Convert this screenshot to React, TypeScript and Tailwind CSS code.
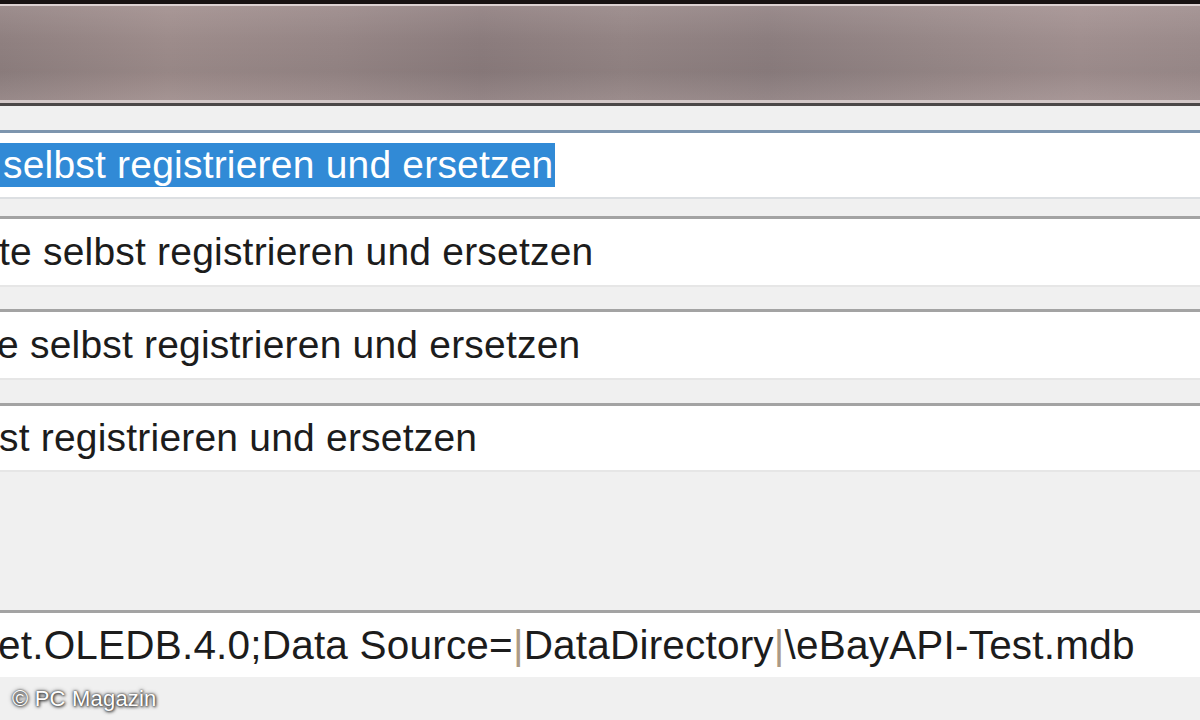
import React from "react";

const rowFont = "font-['Liberation_Sans',Arial,sans-serif]";

function Field({
  children,
  top = "border-[#a3a3a3]",
  height,
}: {
  children: React.ReactNode;
  top?: string;
  height: string;
}) {
  return (
    <div className={`border-t-[3px] ${top} bg-white ${height} flex items-center overflow-hidden whitespace-nowrap`}>
      {children}
    </div>
  );
}

export default function App() {
  return (
    <div className="w-[1200px] h-[720px] overflow-hidden bg-[#f0f0f0] flex flex-col">
      {/* title bar of the window behind, blurred */}
      <div className="h-[4px] bg-[#181212]" />
      <div className="h-[2px] bg-[#ddd2d2]" />
      <div className="h-[94px] bg-[linear-gradient(90deg,#8f8080_0%,#9d8c8b_14%,#968686_28%,#8b7c7d_40%,#938484_52%,#8c7e7f_64%,#978888_78%,#a08f8f_90%,#9b8b8b_100%)]">
        <div className="h-full bg-[linear-gradient(180deg,rgba(255,235,235,0.12)_0%,rgba(0,0,0,0)_35%,rgba(0,0,0,0.04)_70%,rgba(255,240,240,0.08)_100%)]" />
      </div>
      <div className="h-[3px] bg-[#d3c8c8]" />
      <div className="h-[3px] bg-[#4b4747]" />

      <div className={`flex flex-col pt-[24px] ${rowFont} text-[39px] text-[#1c1c1c] tracking-[0.2px]`}>
        <Field top="border-[#7d95ae]" height="h-[67px]">
          <span className="h-[44px] w-[555px] bg-[#318ad6] text-white flex items-center pl-[3px]">
            selbst registrieren und ersetzen
          </span>
        </Field>
        <div className="h-[2px] bg-[#dcdfe2]" />

        <div className="h-[17px]" />
        <Field height="h-[69px]">
          <span className="-ml-[1px]">te selbst registrieren und ersetzen</span>
        </Field>
        <div className="h-[2px] bg-[#e6e6e6]" />

        <div className="h-[22px]" />
        <Field height="h-[69px]">
          <span className="-ml-[3px]">e selbst registrieren und ersetzen</span>
        </Field>
        <div className="h-[2px] bg-[#e6e6e6]" />

        <div className="h-[23px]" />
        <Field height="h-[67px]">
          <span className="-ml-[1px]">st registrieren und ersetzen</span>
        </Field>
        <div className="h-[2px] bg-[#e6e6e6]" />

        <div className="h-[138px]" />
        <Field height="h-[67px]">
          <span className="-ml-[2px] text-[40.5px]">
            et.OLEDB.4.0;Data Source=<span className="text-[#ab9a86]">|</span>DataDirectory
            <span className="text-[#ab9a86]">|</span>\eBayAPI-Test.mdb
          </span>
        </Field>

        <div className="pl-[12px] pt-[6px] leading-[32px] text-[22px] text-white font-['Liberation_Sans',Arial,sans-serif] [text-shadow:0_0_2px_#333,0_0_4px_#555,1px_1px_3px_#444]">
          © PC Magazin
        </div>
      </div>
    </div>
  );
}
